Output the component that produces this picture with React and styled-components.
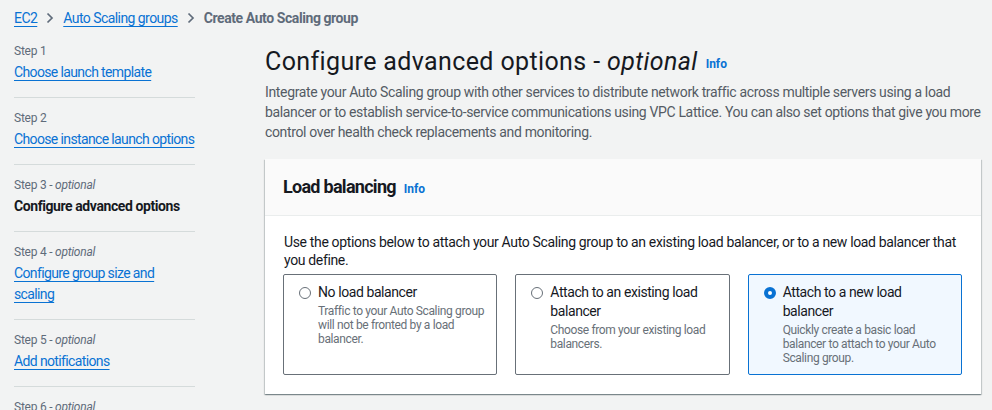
import React from "react";
import styled, { createGlobalStyle } from "styled-components";

const GlobalStyle = createGlobalStyle`
  body {
    margin: 0;
    background: #f2f3f3;
    font-family: Roboto, "Liberation Sans", sans-serif;
    letter-spacing: -0.02em;
    color: #16191f;
  }
`;

const Page = styled.div`
  padding: 8px 11px 0 14px;
  height: 410px;
  overflow: hidden;
  box-sizing: border-box;
`;

const Breadcrumbs = styled.nav`
  display: flex;
  align-items: center;
  gap: 9px;
  font-size: 14px;
  line-height: 20px;
  height: 20px;
  letter-spacing: -0.04em;
`;

const Crumb = styled.a`
  color: #0972d3;
  text-decoration: underline;
  text-underline-offset: 3px;
`;

const CurrentCrumb = styled.span`
  color: #5f6b7a;
  font-weight: 700;
  letter-spacing: -0.03em;
`;

const Chevron = () => (
  <svg width="8" height="12" viewBox="0 0 8 12">
    <path d="M1.5 1.5l4.5 4.5-4.5 4.5" fill="none" stroke="#5f6b7a" strokeWidth="1.7" />
  </svg>
);

const Layout = styled.div`
  display: flex;
  gap: 70px;
  margin-top: 15px;
`;

const Sidebar = styled.ol`
  list-style: none;
  margin: 0;
  padding: 0;
  width: 181px;
  flex-shrink: 0;
`;

const StepItem = styled.li`
  border-bottom: 1px solid #d5dbdb;
  padding: 0 0 14px;
  margin-bottom: 12px;
  font-size: 14px;
  line-height: 21px;
  letter-spacing: -0.045em;
`;

const StepLabel = styled.div`
  font-size: 12px;
  line-height: 16px;
  letter-spacing: -0.02em;
  color: #5f6b7a;
  margin-bottom: 3px;

  em {
    font-style: italic;
  }
`;

const StepLink = styled.a`
  color: #0972d3;
  text-decoration: underline;
  text-underline-offset: 3px;
`;

const StepCurrent = styled.div`
  font-weight: 700;
  letter-spacing: -0.03em;
  color: #16191f;
`;

const Main = styled.main`
  flex: 1;
  min-width: 0;
`;

const Title = styled.h1`
  margin: 3px 0 0;
  font-size: 25px;
  line-height: 32px;
  font-weight: 400;
  letter-spacing: 0.015em;
  color: #16191f;

  em {
    font-style: italic;
  }
`;

const InfoLink = styled.a`
  color: #0972d3;
  font-size: 12px;
  font-weight: 700;
  letter-spacing: 0;
  margin-left: 8px;
  vertical-align: ${(p) => (p.$raised ? "2px" : "baseline")};
`;

const Description = styled.p`
  margin: 2px 0 0;
  font-size: 14px;
  line-height: 20px;
  letter-spacing: -0.025em;
  color: #545b64;
`;

const Panel = styled.section`
  margin-top: 17px;
  background: #fff;
  box-shadow: 0 1px 1px 0 rgba(0, 28, 36, 0.3), 1px 1px 1px 0 rgba(0, 28, 36, 0.15),
    -1px 1px 1px 0 rgba(0, 28, 36, 0.15);
`;

const PanelHeader = styled.header`
  background: #fafafa;
  border-bottom: 1px solid #eaeded;
  padding: 17px 18px;
  display: flex;
  align-items: baseline;
`;

const PanelTitle = styled.h2`
  margin: 0;
  font-size: 18px;
  line-height: 22px;
  font-weight: 700;
  letter-spacing: -0.04em;
`;

const PanelBody = styled.div`
  padding: 17px 19px 19px 18px;
`;

const BodyText = styled.p`
  margin: 0 0 5px 1px;
  font-size: 14px;
  line-height: 18px;
  letter-spacing: -0.025em;
  color: #16191f;
`;

const Cards = styled.div`
  display: grid;
  grid-template-columns: repeat(3, 1fr);
  gap: 18px;
`;

const Card = styled.label`
  display: flex;
  gap: 7px;
  border: 1px solid ${(p) => (p.$selected ? "#0972d3" : "#687078")};
  background: ${(p) => (p.$selected ? "#f1f8ff" : "#fff")};
  border-radius: 2px;
  padding: 8px 12px 8px 15px;
  height: 101px;
  box-sizing: border-box;
`;

const Radio = styled.span`
  flex-shrink: 0;
  width: 12px;
  height: 12px;
  margin-top: 4px;
  border-radius: 50%;
  box-sizing: border-box;
  border: ${(p) => (p.$checked ? "4px solid #0972d3" : "1px solid #687078")};
  background: #fff;
`;

const CardTitle = styled.div`
  font-size: 14px;
  line-height: 19px;
  letter-spacing: -0.03em;
  color: #16191f;
`;

const CardDesc = styled.div`
  font-size: 12px;
  line-height: 14px;
  letter-spacing: -0.03em;
  color: #687078;
  margin-top: 2px;
`;

const steps = [
  { n: 1, label: "Choose launch template" },
  { n: 2, label: "Choose instance launch options" },
  { n: 3, label: "Configure advanced options", optional: true, current: true },
  { n: 4, label: "Configure group size and scaling", optional: true },
  { n: 5, label: "Add notifications", optional: true },
  { n: 6, label: "Add tags", optional: true },
];

const options = [
  {
    title: "No load balancer",
    desc: "Traffic to your Auto Scaling group will not be fronted by a load balancer.",
  },
  {
    title: "Attach to an existing load balancer",
    desc: "Choose from your existing load balancers.",
  },
  {
    title: "Attach to a new load balancer",
    desc: "Quickly create a basic load balancer to attach to your Auto Scaling group.",
    selected: true,
  },
];

export default function App() {
  return (
    <Page>
      <GlobalStyle />
      <Breadcrumbs>
        <Crumb>EC2</Crumb>
        <Chevron />
        <Crumb>Auto Scaling groups</Crumb>
        <Chevron />
        <CurrentCrumb>Create Auto Scaling group</CurrentCrumb>
      </Breadcrumbs>

      <Layout>
        {/* Wizard steps */}
        <Sidebar>
          {steps.map((s) => (
            <StepItem key={s.n}>
              <StepLabel>
                Step {s.n}
                {s.optional && (
                  <>
                    {" - "}
                    <em>optional</em>
                  </>
                )}
              </StepLabel>
              {s.current ? (
                <StepCurrent>{s.label}</StepCurrent>
              ) : (
                <StepLink>{s.label}</StepLink>
              )}
            </StepItem>
          ))}
        </Sidebar>

        <Main>
          <Title>
            Configure advanced options - <em>optional</em>
            <InfoLink $raised>Info</InfoLink>
          </Title>
          <Description>
            Integrate your Auto Scaling group with other services to distribute network
            traffic across multiple servers using a load balancer or to establish
            service-to-service communications using VPC Lattice. You can also set options
            that give you more control over health check replacements and monitoring.
          </Description>

          <Panel>
            <PanelHeader>
              <PanelTitle>Load balancing</PanelTitle>
              <InfoLink>Info</InfoLink>
            </PanelHeader>
            <PanelBody>
              <BodyText>
                Use the options below to attach your Auto Scaling group to an existing load
                balancer, or to a new load balancer that you define.
              </BodyText>
              <Cards>
                {options.map((o) => (
                  <Card key={o.title} $selected={o.selected}>
                    <Radio $checked={o.selected} />
                    <div>
                      <CardTitle>{o.title}</CardTitle>
                      <CardDesc>{o.desc}</CardDesc>
                    </div>
                  </Card>
                ))}
              </Cards>
            </PanelBody>
          </Panel>
        </Main>
      </Layout>
    </Page>
  );
}
